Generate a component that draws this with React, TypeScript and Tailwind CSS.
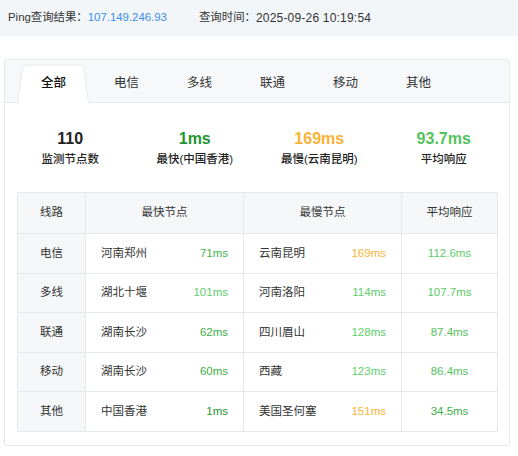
import React from "react";

const tabs = ["全部", "电信", "多线", "联通", "移动", "其他"];

const stats = [
  { v: "110", l: "监测节点数", c: "text-[#222]" },
  { v: "1ms", l: "最快(中国香港)", c: "text-[#23952f]" },
  { v: "169ms", l: "最慢(云南昆明)", c: "text-[#fbb238]" },
  { v: "93.7ms", l: "平均响应", c: "text-[#52c45c]" },
];

const rows = [
  { line: "电信", fn: "河南郑州", fv: "71ms", fc: "text-[#3fb44a]", sn: "云南昆明", sv: "169ms", sc: "text-[#fbb238]", avg: "112.6ms", ac: "text-[#5ccb68]" },
  { line: "多线", fn: "湖北十堰", fv: "101ms", fc: "text-[#5ccf69]", sn: "河南洛阳", sv: "114ms", sc: "text-[#5ccf69]", avg: "107.7ms", ac: "text-[#5ccb68]" },
  { line: "联通", fn: "湖南长沙", fv: "62ms", fc: "text-[#3cb048]", sn: "四川眉山", sv: "128ms", sc: "text-[#5ccf69]", avg: "87.4ms", ac: "text-[#52c45c]" },
  { line: "移动", fn: "湖南长沙", fv: "60ms", fc: "text-[#3cb048]", sn: "西藏", sv: "123ms", sc: "text-[#5ccf69]", avg: "86.4ms", ac: "text-[#52c45c]" },
  { line: "其他", fn: "中国香港", fv: "1ms", fc: "text-[#23952f]", sn: "美国圣何塞", sv: "151ms", sc: "text-[#fbb238]", avg: "34.5ms", ac: "text-[#3db14a]" },
];

export default function App() {
  return (
    <div className="w-[518px] h-[456px] bg-white text-[#333] text-[11.5px] font-['Liberation_Sans','Noto_Sans_CJK_SC',sans-serif]">
      <div className="h-[36px] bg-[#f3f6f8] flex items-center pl-[8px] text-[11.4px]">
        <span>Ping查询结果：</span>
        <span className="text-[#3a8ee6]">107.149.246.93</span>
        <span className="ml-[32px]">查询时间：</span>
        <span className="text-[12px] tracking-[0.2px]">2025-09-26 10:19:54</span>
      </div>

      <div className="mt-[23px] mx-[4px] w-[506px] h-[387px] border border-[#e6e8ea] rounded-[3px] overflow-hidden">
        <div className="h-[43px] bg-[#f6f8fa] border-b border-[#e8eaec] flex items-end pl-[12px]">
          {tabs.map((t, i) => (
            <div
              key={t}
              className={
                "relative w-[73px] flex items-center justify-center text-[12.5px] " +
                (i === 0 ? "text-[#111] font-medium -mb-px h-[39px]" : "text-[#333] h-[38px]")
              }
            >
              {i === 0 && (
                <svg className="absolute inset-0" width="73" height="39" viewBox="0 0 73 39">
                  <path
                    d="M0.5 39 L5 6 Q5.8 1 11 1 L61 1 Q66.2 1 67 6 L71.5 39 Z"
                    fill="#ffffff"
                    stroke="#e8eaec"
                    strokeWidth="1"
                  />
                  <rect x="1" y="37.5" width="70.5" height="2" fill="#ffffff" />
                </svg>
              )}
              <span className="relative">{t}</span>
            </div>
          ))}
        </div>

        <div className="grid grid-cols-4 px-[3px] pt-[26px]">
          {stats.map((s) => (
            <div key={s.l} className="flex flex-col items-center">
              <div className={"text-[16px] font-semibold leading-[20px] " + s.c}>{s.v}</div>
              <div className="mt-[2px] text-[11.5px] font-medium text-[#222] leading-[16px]">{s.l}</div>
            </div>
          ))}
        </div>

        <div className="px-[12px] mt-[25px]">
          <table className="w-[480px] border-collapse table-fixed">
            <colgroup>
              <col className="w-[68px]" />
              <col className="w-[158px]" />
              <col className="w-[158px]" />
              <col className="w-[96px]" />
            </colgroup>
            <thead>
              <tr className="h-[41px] bg-[#f5f7f8]">
                <th className="border border-[#e6e8ea] font-normal">线路</th>
                <th className="border border-[#e6e8ea] font-normal">最快节点</th>
                <th className="border border-[#e6e8ea] font-normal">最慢节点</th>
                <th className="border border-[#e6e8ea] font-normal">平均响应</th>
              </tr>
            </thead>
            <tbody>
              {rows.map((r) => (
                <tr key={r.line} className="h-[39.6px]">
                  <td className="border border-[#e6e8ea] bg-[#f5f7f8] text-center">{r.line}</td>
                  <td className="border border-[#e6e8ea] px-[15px]">
                    <div className="flex justify-between">
                      <span>{r.fn}</span>
                      <span className={r.fc}>{r.fv}</span>
                    </div>
                  </td>
                  <td className="border border-[#e6e8ea] px-[15px]">
                    <div className="flex justify-between">
                      <span>{r.sn}</span>
                      <span className={r.sc}>{r.sv}</span>
                    </div>
                  </td>
                  <td className={"border border-[#e6e8ea] text-center " + r.ac}>{r.avg}</td>
                </tr>
              ))}
            </tbody>
          </table>
        </div>
      </div>
    </div>
  );
}
